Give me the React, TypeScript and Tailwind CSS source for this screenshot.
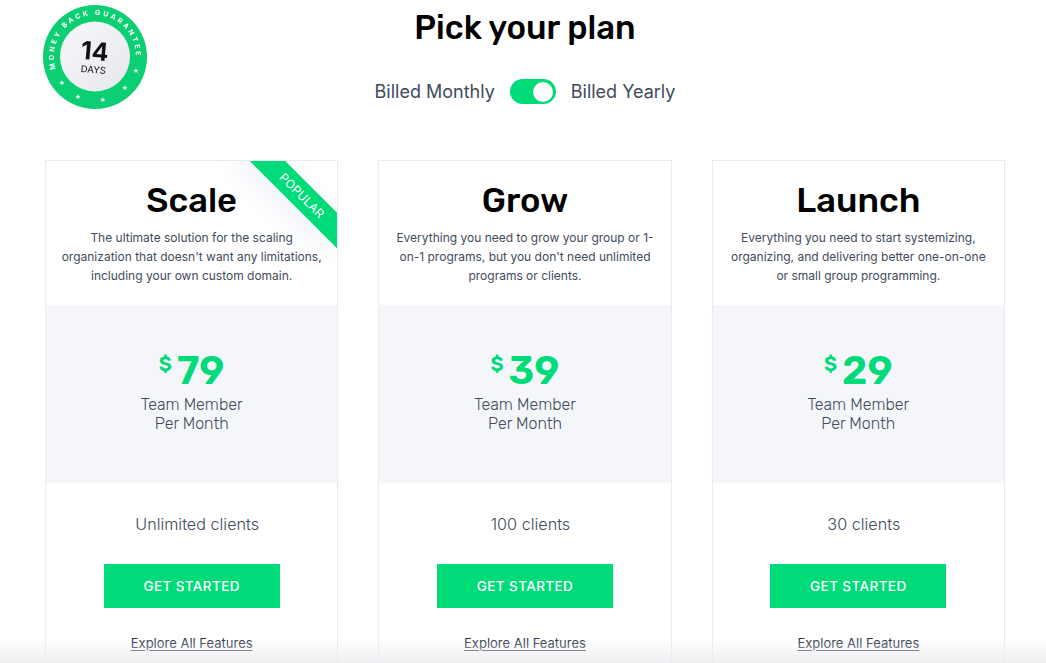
const plans = [
  {
    name: "Scale",
    blurb: ["The ultimate solution for the scaling", "organization that doesn't want any limitations,", "including your own custom domain."],
    price: 79,
    clients: "Unlimited clients",
    popular: true,
  },
  {
    name: "Grow",
    blurb: ["Everything you need to grow your group or 1-", "on-1 programs, but you don't need unlimited", "programs or clients."],
    price: 39,
    clients: "100 clients",
  },
  {
    name: "Launch",
    blurb: ["Everything you need to start systemizing,", "organizing, and delivering better one-on-one", "or small group programming."],
    price: 29,
    clients: "30 clients",
  },
]

const GuaranteeBadge = () => (
  <svg viewBox="0 0 104 106" className="absolute left-[43px] top-[4px] w-[104px] h-[106px] blur-[0.5px]">
    <defs>
      <path id="badge-arc" d="M 13.1 65 A 41 41 0 1 1 93 52" />
      <linearGradient id="badge-fill" x1="0" y1="0" x2="1" y2="1">
        <stop offset="0" stopColor="#f6f7fa" />
        <stop offset="1" stopColor="#e6e8ee" />
      </linearGradient>
    </defs>
    <circle cx="52" cy="53" r="52" fill="#0bcf72" />
    <circle cx="52" cy="52.5" r="35" fill="url(#badge-fill)" />
    <text fontSize="7" fontWeight="700" fill="#fff" letterSpacing="2.5" fontFamily="Inter, sans-serif">
      <textPath href="#badge-arc">MONEY BACK GUARANTEE</textPath>
    </text>
    {[[19, 81], [35, 95], [60, 98], [82, 86], [93, 69]].map(([x, y]) => (
      <text key={x} x={x} y={y} fontSize="7" fill="#fff" textAnchor="middle" fontFamily="DejaVu Sans, sans-serif">★</text>
    ))}
    <text x="51" y="56" fontSize="25" fontWeight="700" fill="#111" textAnchor="middle" fontFamily="Inter, sans-serif" transform="rotate(5 51 56)">14</text>
    <text x="50" y="69" fontSize="9.5" fontWeight="500" fill="#333" textAnchor="middle" fontFamily="Inter, sans-serif" transform="rotate(5 50 69)">DAYS</text>
  </svg>
)

const PopularRibbon = () => (
  <div className="absolute right-0 top-0 w-[170px] h-[144px] overflow-hidden">
    <div className="absolute left-[70px] top-[22px] w-[130px] h-[25px] rotate-45 bg-[#00db7a] shadow-[-10px_10px_30px_#eef0f6] flex items-center justify-center text-[12px] text-white tracking-[0.2px]">
      POPULAR
    </div>
  </div>
)

const PlanCard = ({ name, blurb, price, clients, popular }: (typeof plans)[number]) => (
  <div className="relative w-[293.33px] h-[540px] border border-[#e9eaf3] bg-white flex flex-col">
    <div className="relative h-[144px] shrink-0 flex flex-col items-center overflow-hidden">
      {popular && <PopularRibbon />}
      <h2 className="relative mt-[20px] text-[34.5px] leading-[40px] font-medium text-black font-['Rubik','Roboto',sans-serif]">{name}</h2>
      <p className="relative mt-[7px] text-center text-[12px] leading-[19px] text-[#3f4b5b]">
        {blurb.map((line) => (
          <span key={line} className="block whitespace-nowrap">{line}</span>
        ))}
      </p>
    </div>
    <div className="h-[178px] shrink-0 bg-[#f4f6fa] flex flex-col items-center pt-[45px]">
      <div className="flex items-start text-[#00db7a] font-['Rubik','Roboto',sans-serif] font-semibold">
        <span className="text-[20px] leading-[20px] mt-[4px] mr-[5px]">$</span>
        <span className="text-[40px] leading-[42px]">{price}</span>
      </div>
      <div className="mt-[3px] text-center text-[16px] leading-[19px] font-light text-[#3f4b5b] font-['Rubik','Roboto',sans-serif]">
        <div>Team Member</div>
        <div>Per Month</div>
      </div>
    </div>
    <div className="flex flex-col items-center">
      <div className="mt-[31px] pl-[11px] text-[16.2px] leading-[20px] font-light text-[#3f4b5b]">{clients}</div>
      <button className="mt-[30px] w-[176px] h-[44px] bg-[#00db7a] text-white text-[13.5px] font-medium tracking-[0.4px]">GET STARTED</button>
      <a className="mt-[26px] text-[13px] leading-[18px] text-[#2d3748] underline underline-offset-2">Explore All Features</a>
    </div>
  </div>
)

const App = () => (
  <div className="relative w-[1046px] h-[663px] overflow-hidden bg-white font-['Inter',sans-serif]">
    <GuaranteeBadge />
    <h1 className="pt-[10px] pl-[4px] text-center text-[33px] leading-[36px] font-medium text-black font-['Rubik','Roboto',sans-serif]">Pick your plan</h1>
    <div className="mt-[33px] pl-[4px] flex items-center justify-center gap-[15px] text-[18px] leading-[24px] text-[#3f4b5b]">
      <span>Billed Monthly</span>
      <div className="w-[46px] h-[25px] rounded-full bg-[#00db7a] flex items-center justify-end pr-[3px]">
        <div className="w-[20px] h-[20px] rounded-full bg-white" />
      </div>
      <span>Billed Yearly</span>
    </div>
    <div className="mt-[56px] pl-[45px] flex gap-[40px]">
      {plans.map((plan) => (
        <PlanCard key={plan.name} {...plan} />
      ))}
    </div>
    <div className="absolute inset-x-0 bottom-0 h-[24px] bg-gradient-to-b from-white/0 to-[#ececef]/90" />
  </div>
)

export default App
